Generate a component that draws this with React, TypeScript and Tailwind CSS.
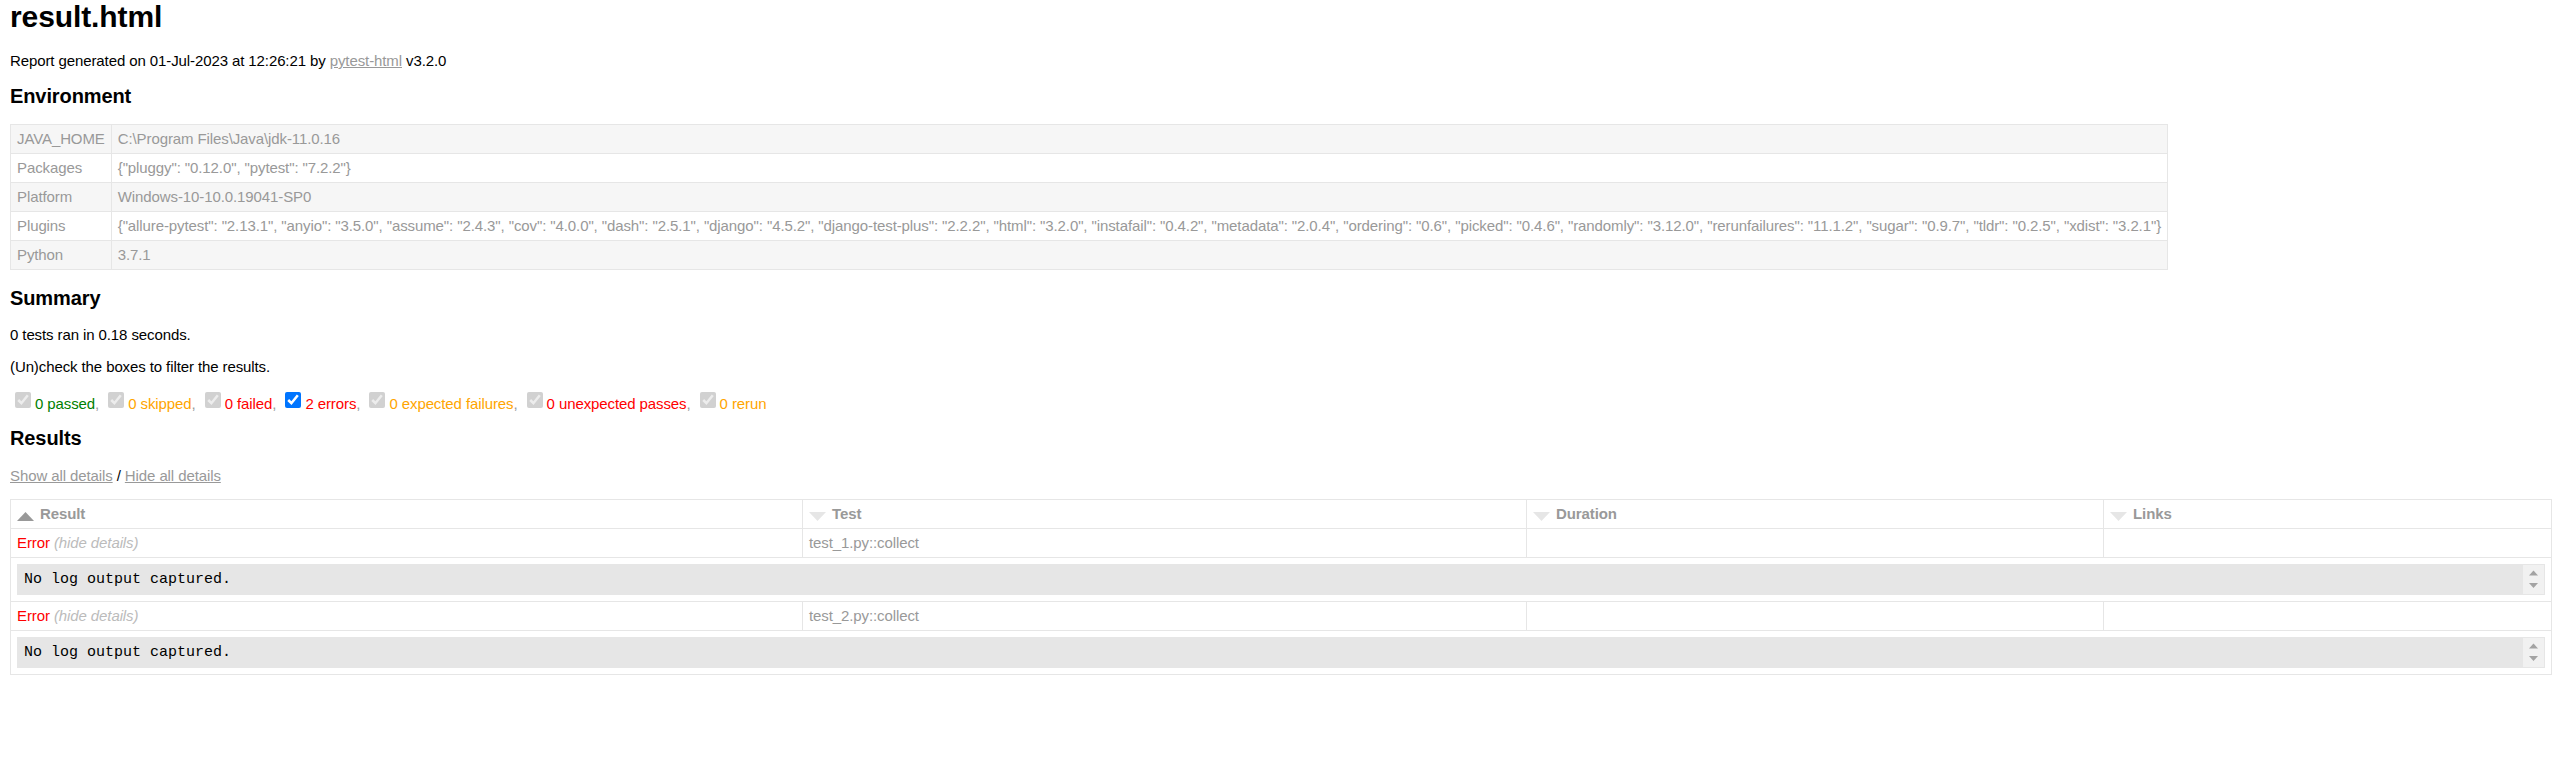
import { Fragment } from 'react';

const envRows: [string, string][] = [
  ['JAVA_HOME', 'C:\\Program Files\\Java\\jdk-11.0.16'],
  ['Packages', '{"pluggy": "0.12.0", "pytest": "7.2.2"}'],
  ['Platform', 'Windows-10-10.0.19041-SP0'],
  [
    'Plugins',
    '{"allure-pytest": "2.13.1", "anyio": "3.5.0", "assume": "2.4.3", "cov": "4.0.0", "dash": "2.5.1", "django": "4.5.2", "django-test-plus": "2.2.2", "html": "3.2.0", "instafail": "0.4.2", "metadata": "2.0.4", "ordering": "0.6", "picked": "0.4.6", "randomly": "3.12.0", "rerunfailures": "11.1.2", "sugar": "0.9.7", "tldr": "0.2.5", "xdist": "3.2.1"}',
  ],
  ['Python', '3.7.1'],
];

const filters = [
  { label: '0 passed', color: 'text-[#008000]', enabled: false },
  { label: '0 skipped', color: 'text-[#ffa500]', enabled: false },
  { label: '0 failed', color: 'text-[#ff0000]', enabled: false },
  { label: '2 errors', color: 'text-[#ff0000]', enabled: true },
  { label: '0 expected failures', color: 'text-[#ffa500]', enabled: false },
  { label: '0 unexpected passes', color: 'text-[#ff0000]', enabled: false },
  { label: '0 rerun', color: 'text-[#ffa500]', enabled: false },
];

const results = ['test_1.py::collect', 'test_2.py::collect'];

const cell = 'border border-[#e6e6e6] px-[6px] py-[6px] leading-[16px] text-left';

const SortIcon = ({ active }: { active?: boolean }) => (
  <svg width="17" height="9" viewBox="0 0 17 9" className="float-left mt-[6px] mr-[6px]">
    {active ? (
      <polygon points="0,9 17,9 8.5,0" fill="#999" />
    ) : (
      <polygon points="0,0 17,0 8.5,9" fill="#e6e6e6" />
    )}
  </svg>
);

// scroll buttons of the log box (overflow-y: scroll in the original report)
const Scrollbar = () => (
  <div className="w-[21px] shrink-0 bg-[#f1f1f1]">
    <svg width="21" height="29" viewBox="0 0 21 29">
      <polygon points="6,10.5 15,10.5 10.5,5.5" fill="#a3a3a3" />
      <polygon points="6,18 15,18 10.5,23" fill="#a3a3a3" />
    </svg>
  </div>
);

const App = () => {
  return (
    <div className="min-h-screen bg-white pl-[10px] pb-[20px] font-['Liberation_Sans',Arial,Helvetica,sans-serif] text-[15px] leading-[17px] tracking-[-0.1px] text-[#999]">
      <h1 className="text-[30px] leading-[34px] font-bold text-black">result.html</h1>
      <p className="mt-[18px] text-black">
        Report generated on 01-Jul-2023 at 12:26:21 by{' '}
        <a href="#" className="text-[#999] underline">
          pytest-html
        </a>{' '}
        v3.2.0
      </p>

      <h2 className="mt-[16px] text-[20px] leading-[23px] font-bold text-black">Environment</h2>
      <table className="mt-[16px] border-collapse">
        <tbody>
          {envRows.map(([key, value], i) => (
            <tr key={key} className={i % 2 === 0 ? 'bg-[#f6f6f6]' : 'bg-white'}>
              <td className={`${cell} whitespace-nowrap`}>{key}</td>
              <td className={`${cell} whitespace-nowrap`}>{value}</td>
            </tr>
          ))}
        </tbody>
      </table>

      <h2 className="mt-[17px] text-[20px] leading-[23px] font-bold text-black">Summary</h2>
      <p className="mt-[16px] text-black">0 tests ran in 0.18 seconds.</p>
      <p className="mt-[15px] text-black">(Un)check the boxes to filter the results.</p>
      <div className="mt-[17px] flex items-start">
        {filters.map((f, i) => (
          <Fragment key={f.label}>
            <input
              type="checkbox"
              defaultChecked
              disabled={!f.enabled}
              className="my-0 ml-[5px] mr-[4px] h-4 w-4 shrink-0"
            />
            <span className="mt-[3px] whitespace-pre">
              <span className={f.color}>{f.label}</span>
              {i < filters.length - 1 ? ', ' : ''}
            </span>
          </Fragment>
        ))}
      </div>

      <h2 className="mt-[15px] text-[20px] leading-[23px] font-bold text-black">Results</h2>
      <p className="mt-[17px] text-black">
        <a href="#" className="text-[#999] underline">
          Show all details
        </a>{' '}
        /{' '}
        <a href="#" className="text-[#999] underline">
          Hide all details
        </a>
      </p>

      <table className="mt-[15px] w-[2541px] table-fixed border-collapse border border-[#e6e6e6]">
        <colgroup>
          <col className="w-[792px]" />
          <col className="w-[724px]" />
          <col className="w-[577px]" />
          <col className="w-[448px]" />
        </colgroup>
        <thead>
          <tr>
            <th className={`${cell} font-bold`}>
              <SortIcon active />
              Result
            </th>
            <th className={`${cell} font-bold`}>
              <SortIcon />
              Test
            </th>
            <th className={`${cell} font-bold`}>
              <SortIcon />
              Duration
            </th>
            <th className={`${cell} font-bold`}>
              <SortIcon />
              Links
            </th>
          </tr>
        </thead>
        {results.map((name) => (
          <tbody key={name}>
            <tr>
              <td className={`${cell} text-[#ff0000]`}>
                Error<span className="italic text-[#bbb]"> (hide details)</span>
              </td>
              <td className={cell}>{name}</td>
              <td className={cell}></td>
              <td className={cell}></td>
            </tr>
            <tr>
              <td colSpan={4} className={cell}>
                <div className="flex border border-[#e6e6e6] bg-[#e6e6e6]">
                  <div className="flex-1 px-[6px] py-[6px] font-['Liberation_Mono','Courier_New',monospace] text-[15px] leading-[17px] tracking-normal text-black whitespace-pre-wrap">
                    No log output captured.
                  </div>
                  <Scrollbar />
                </div>
              </td>
            </tr>
          </tbody>
        ))}
      </table>
    </div>
  );
};

export default App;
